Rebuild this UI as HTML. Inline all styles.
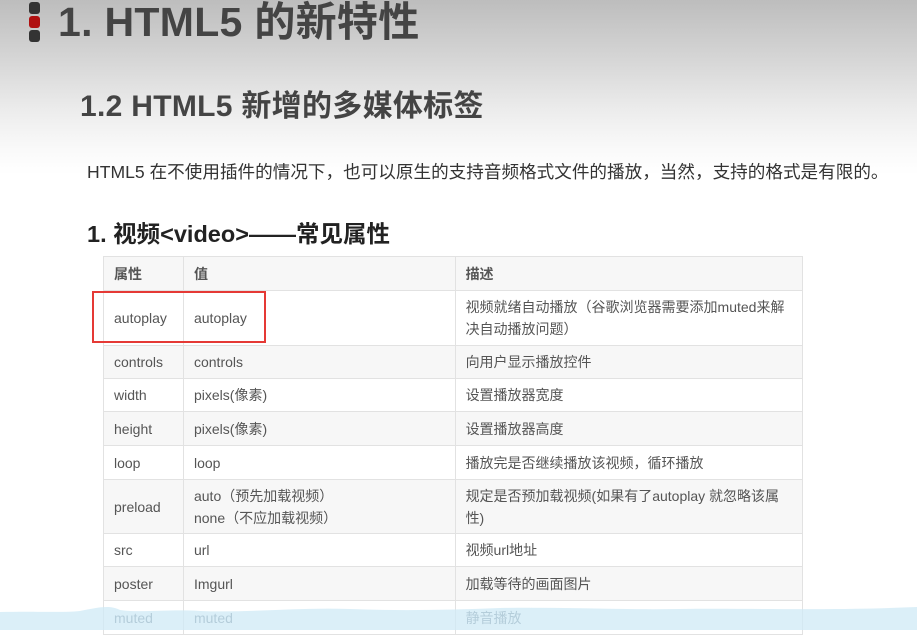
<!DOCTYPE html>
<html><head><meta charset="utf-8"><style>
*{margin:0;padding:0;box-sizing:border-box}
html{background:#fff}
body{width:917px;height:630px;overflow:hidden;position:relative;font-family:"Liberation Sans","Noto Sans CJK SC",sans-serif;background:linear-gradient(#bdbdbd 0px,#d6d6d6 60px,#ececec 110px,#fafafa 150px,#fff 175px);}
.a{position:absolute;white-space:nowrap}
.bar{position:absolute;left:29px;width:11px;border-radius:3px;background:#333}
table{position:absolute;left:103px;top:256px;border-collapse:collapse;width:700px;font-size:14px;color:#555}
td{border:1px solid #e2e2e2;padding:0 10px;vertical-align:middle;line-height:22px}
tr:nth-child(odd) td{background:#f7f7f7}
tr:nth-child(even) td{background:#fff}
</style></head><body>
<div class="bar" style="top:2px;height:12px"></div>
<div class="bar" style="top:16px;height:12px;background:#b01010"></div>
<div class="bar" style="top:30px;height:12px"></div>
<div class="a" style="left:58px;top:-1px;font-size:41px;font-weight:bold;color:#444;line-height:46px;letter-spacing:0.3px">1. HTML5 的新特性</div>
<div class="a" style="left:80px;top:89px;font-size:30px;font-weight:bold;color:#444;line-height:36px;letter-spacing:0.3px">1.2 HTML5 新增的多媒体标签</div>
<div class="a" style="left:87px;top:160px;font-size:17.6px;color:#333;line-height:24px">HTML5 在不使用插件的情况下，也可以原生的支持音频格式文件的播放，当然，支持的格式是有限的。</div>
<div class="a" style="left:87px;top:219px;font-size:23.5px;font-weight:bold;color:#222;line-height:30px">1. 视频&lt;video&gt;——常见属性</div>
<table>
<colgroup><col style="width:80px"><col style="width:272px"><col style="width:348px"></colgroup>
<tr style="height:34px"><td><b>属性</b></td><td><b>值</b></td><td><b>描述</b></td></tr>
<tr style="height:55px"><td>autoplay</td><td>autoplay</td><td>视频就绪自动播放（谷歌浏览器需要添加muted来解决自动播放问题）</td></tr>
<tr style="height:33px"><td>controls</td><td>controls</td><td>向用户显示播放控件</td></tr>
<tr style="height:33px"><td>width</td><td>pixels(像素)</td><td>设置播放器宽度</td></tr>
<tr style="height:34px"><td>height</td><td>pixels(像素)</td><td>设置播放器高度</td></tr>
<tr style="height:34px"><td>loop</td><td>loop</td><td>播放完是否继续播放该视频，循环播放</td></tr>
<tr style="height:54px"><td>preload</td><td>auto（预先加载视频）<br>none（不应加载视频）</td><td>规定是否预加载视频(如果有了autoplay 就忽略该属性)</td></tr>
<tr style="height:33px"><td>src</td><td>url</td><td>视频url地址</td></tr>
<tr style="height:34px"><td>poster</td><td>Imgurl</td><td>加载等待的画面图片</td></tr>
<tr style="height:34px"><td style="color:#678">muted</td><td style="color:#678">muted</td><td style="color:#678">静音播放</td></tr>
</table>
<div class="a" style="left:92px;top:291px;width:174px;height:52px;border:2px solid #e53935"></div>
<svg class="a" style="left:0;top:595px" width="917" height="35"><path d="M0 17 C40 16 60 18 80 16 C100 12 110 10 120 15 C140 18 170 14 200 16 C250 18 300 12 350 14 C400 16 450 15 500 13 C560 12 620 15 680 14 C750 13 820 16 917 12 L917 35 L0 35Z" fill="#cfe9f5" opacity="0.75"/></svg>
</body></html>
